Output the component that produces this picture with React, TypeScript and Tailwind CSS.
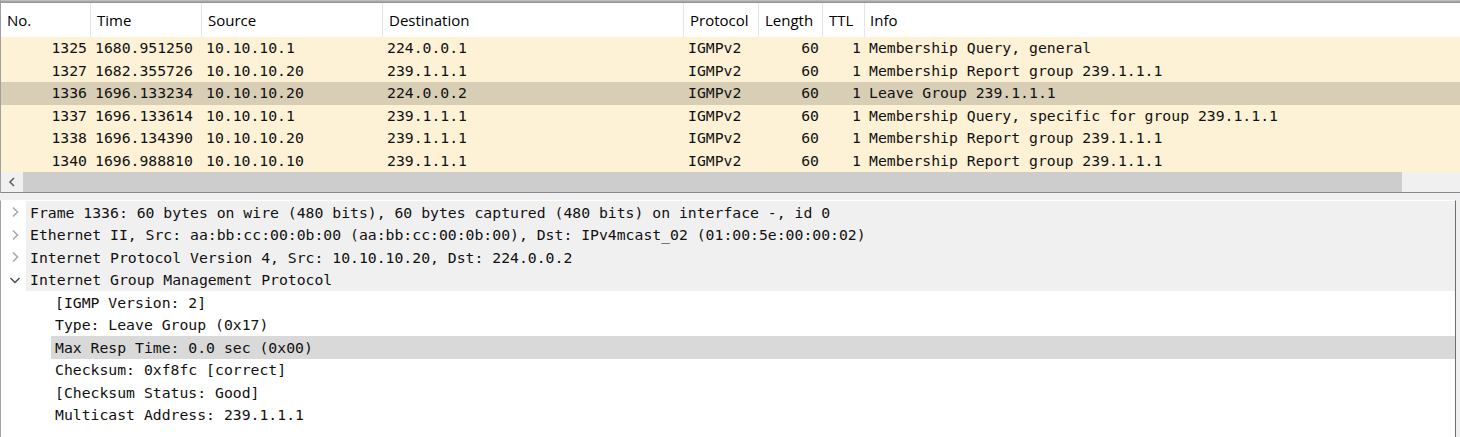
import React from "react";

const mono = { fontFamily: '"DejaVu Sans Mono", "Liberation Mono", monospace' };

const cols = [
  { name: "No.", w: "w-[90px]", align: "right" },
  { name: "Time", w: "w-[111px]", align: "left" },
  { name: "Source", w: "w-[181px]", align: "left" },
  { name: "Destination", w: "w-[301px]", align: "left" },
  { name: "Protocol", w: "w-[75px]", align: "left" },
  { name: "Length", w: "w-[64px]", align: "right" },
  { name: "TTL", w: "w-[42px]", align: "right" },
];

const rows = [
  ["1325", "1680.951250", "10.10.10.1", "224.0.0.1", "IGMPv2", "60", "1", "Membership Query, general"],
  ["1327", "1682.355726", "10.10.10.20", "239.1.1.1", "IGMPv2", "60", "1", "Membership Report group 239.1.1.1"],
  ["1336", "1696.133234", "10.10.10.20", "224.0.0.2", "IGMPv2", "60", "1", "Leave Group 239.1.1.1"],
  ["1337", "1696.133614", "10.10.10.1", "239.1.1.1", "IGMPv2", "60", "1", "Membership Query, specific for group 239.1.1.1"],
  ["1338", "1696.134390", "10.10.10.20", "239.1.1.1", "IGMPv2", "60", "1", "Membership Report group 239.1.1.1"],
  ["1340", "1696.988810", "10.10.10.10", "239.1.1.1", "IGMPv2", "60", "1", "Membership Report group 239.1.1.1"],
];

const Chevron = ({ down }: { down?: boolean }) =>
  down ? (
    <svg width="14" height="14" viewBox="0 0 14 14">
      <path d="M2.5 5 L7 9.5 L11.5 5" fill="none" stroke="#505050" strokeWidth="1.5" />
    </svg>
  ) : (
    <svg width="14" height="14" viewBox="0 0 14 14">
      <path d="M5 2.5 L9.5 7 L5 11.5" fill="none" stroke="#a8a8a8" strokeWidth="1.5" />
    </svg>
  );

export default function App() {
  return (
    <div
      className="w-[1460px] h-[437px] bg-[#f0f0f0] overflow-hidden flex flex-col"
      style={{ fontFamily: '"Open Sans", "Noto Sans", sans-serif' }}
    >
      {/* top packet list */}
      <div className="flex flex-col border-l border-[#a0a0a0]">
        <div className="h-[3px] bg-gradient-to-b from-[#c4c4c4] to-[#8c8c8c]" />
        <div className="h-[34px] bg-white flex text-[15px] text-black">
          {cols.map((c) => (
            <div key={c.name} className={`${c.w} shrink-0 border-r border-[#e5e5e5] pl-[6px] pt-[1px] flex items-center`}>
              {c.name}
            </div>
          ))}
          <div className="flex-1 pl-[5px] pt-[1px] flex items-center">Info</div>
        </div>
        {rows.map((r, i) => (
          <div
            key={r[0]}
            className={`h-[22.5px] flex items-center text-[14.77px] text-[#111] ${i === 2 ? "bg-[#d8cdb5]" : "bg-[#fdf1d6]"}`}
            style={mono}
          >
            {cols.map((c, j) => (
              <div
                key={c.name}
                className={`${c.w} shrink-0 whitespace-pre ${c.align === "right" ? "text-right pr-[4px]" : "pl-[4px]"}`}
              >
                {r[j]}
              </div>
            ))}
            <div className="flex-1 pl-[4px] whitespace-pre">{r[7]}</div>
          </div>
        ))}
        <div className="h-[20px] flex bg-[#f0f0f0]">
          <div className="w-[22px] flex items-center justify-center">
            <svg width="10" height="12" viewBox="0 0 10 12">
              <path d="M7 2 L3 6 L7 10" fill="none" stroke="#606060" strokeWidth="1.6" />
            </svg>
          </div>
          <div className="w-[1379px] bg-[#cdcdcd]" />
          <div className="flex-1" />
        </div>
        <div className="h-[1px] bg-[#828790]" />
      </div>
      <div className="h-[7px]" />
      {/* detail tree */}
      <div
        className="w-[1456px] flex-1 bg-white border-l border-[#a0a0a0] border-r border-r-[#6e6e6e] border-t border-t-white text-[14.77px] text-[#111]"
        style={mono}
      >
        {[
          "Frame 1336: 60 bytes on wire (480 bits), 60 bytes captured (480 bits) on interface -, id 0",
          "Ethernet II, Src: aa:bb:cc:00:0b:00 (aa:bb:cc:00:0b:00), Dst: IPv4mcast_02 (01:00:5e:00:00:02)",
          "Internet Protocol Version 4, Src: 10.10.10.20, Dst: 224.0.0.2",
          "Internet Group Management Protocol",
        ].map((t, i) => (
          <div key={t} className="h-[22.5px] flex items-center">
            <div className="w-[25px] flex items-center justify-center pl-[2px]">
              <Chevron down={i === 3} />
            </div>
            <div className="flex-1 h-full bg-[#f0f0f0] flex items-center pl-[4px] pt-[1px] whitespace-pre">{t}</div>
          </div>
        ))}
        {[
          "[IGMP Version: 2]",
          "Type: Leave Group (0x17)",
          "Max Resp Time: 0.0 sec (0x00)",
          "Checksum: 0xf8fc [correct]",
          "[Checksum Status: Good]",
          "Multicast Address: 239.1.1.1",
        ].map((t, i) => (
          <div key={t} className="h-[22.5px] flex items-center pl-[50px]">
            <div className={`flex-1 h-full flex items-center pl-[4px] pt-[1px] whitespace-pre ${i === 2 ? "bg-[#d9d9d9]" : ""}`}>{t}</div>
          </div>
        ))}
      </div>
    </div>
  );
}
